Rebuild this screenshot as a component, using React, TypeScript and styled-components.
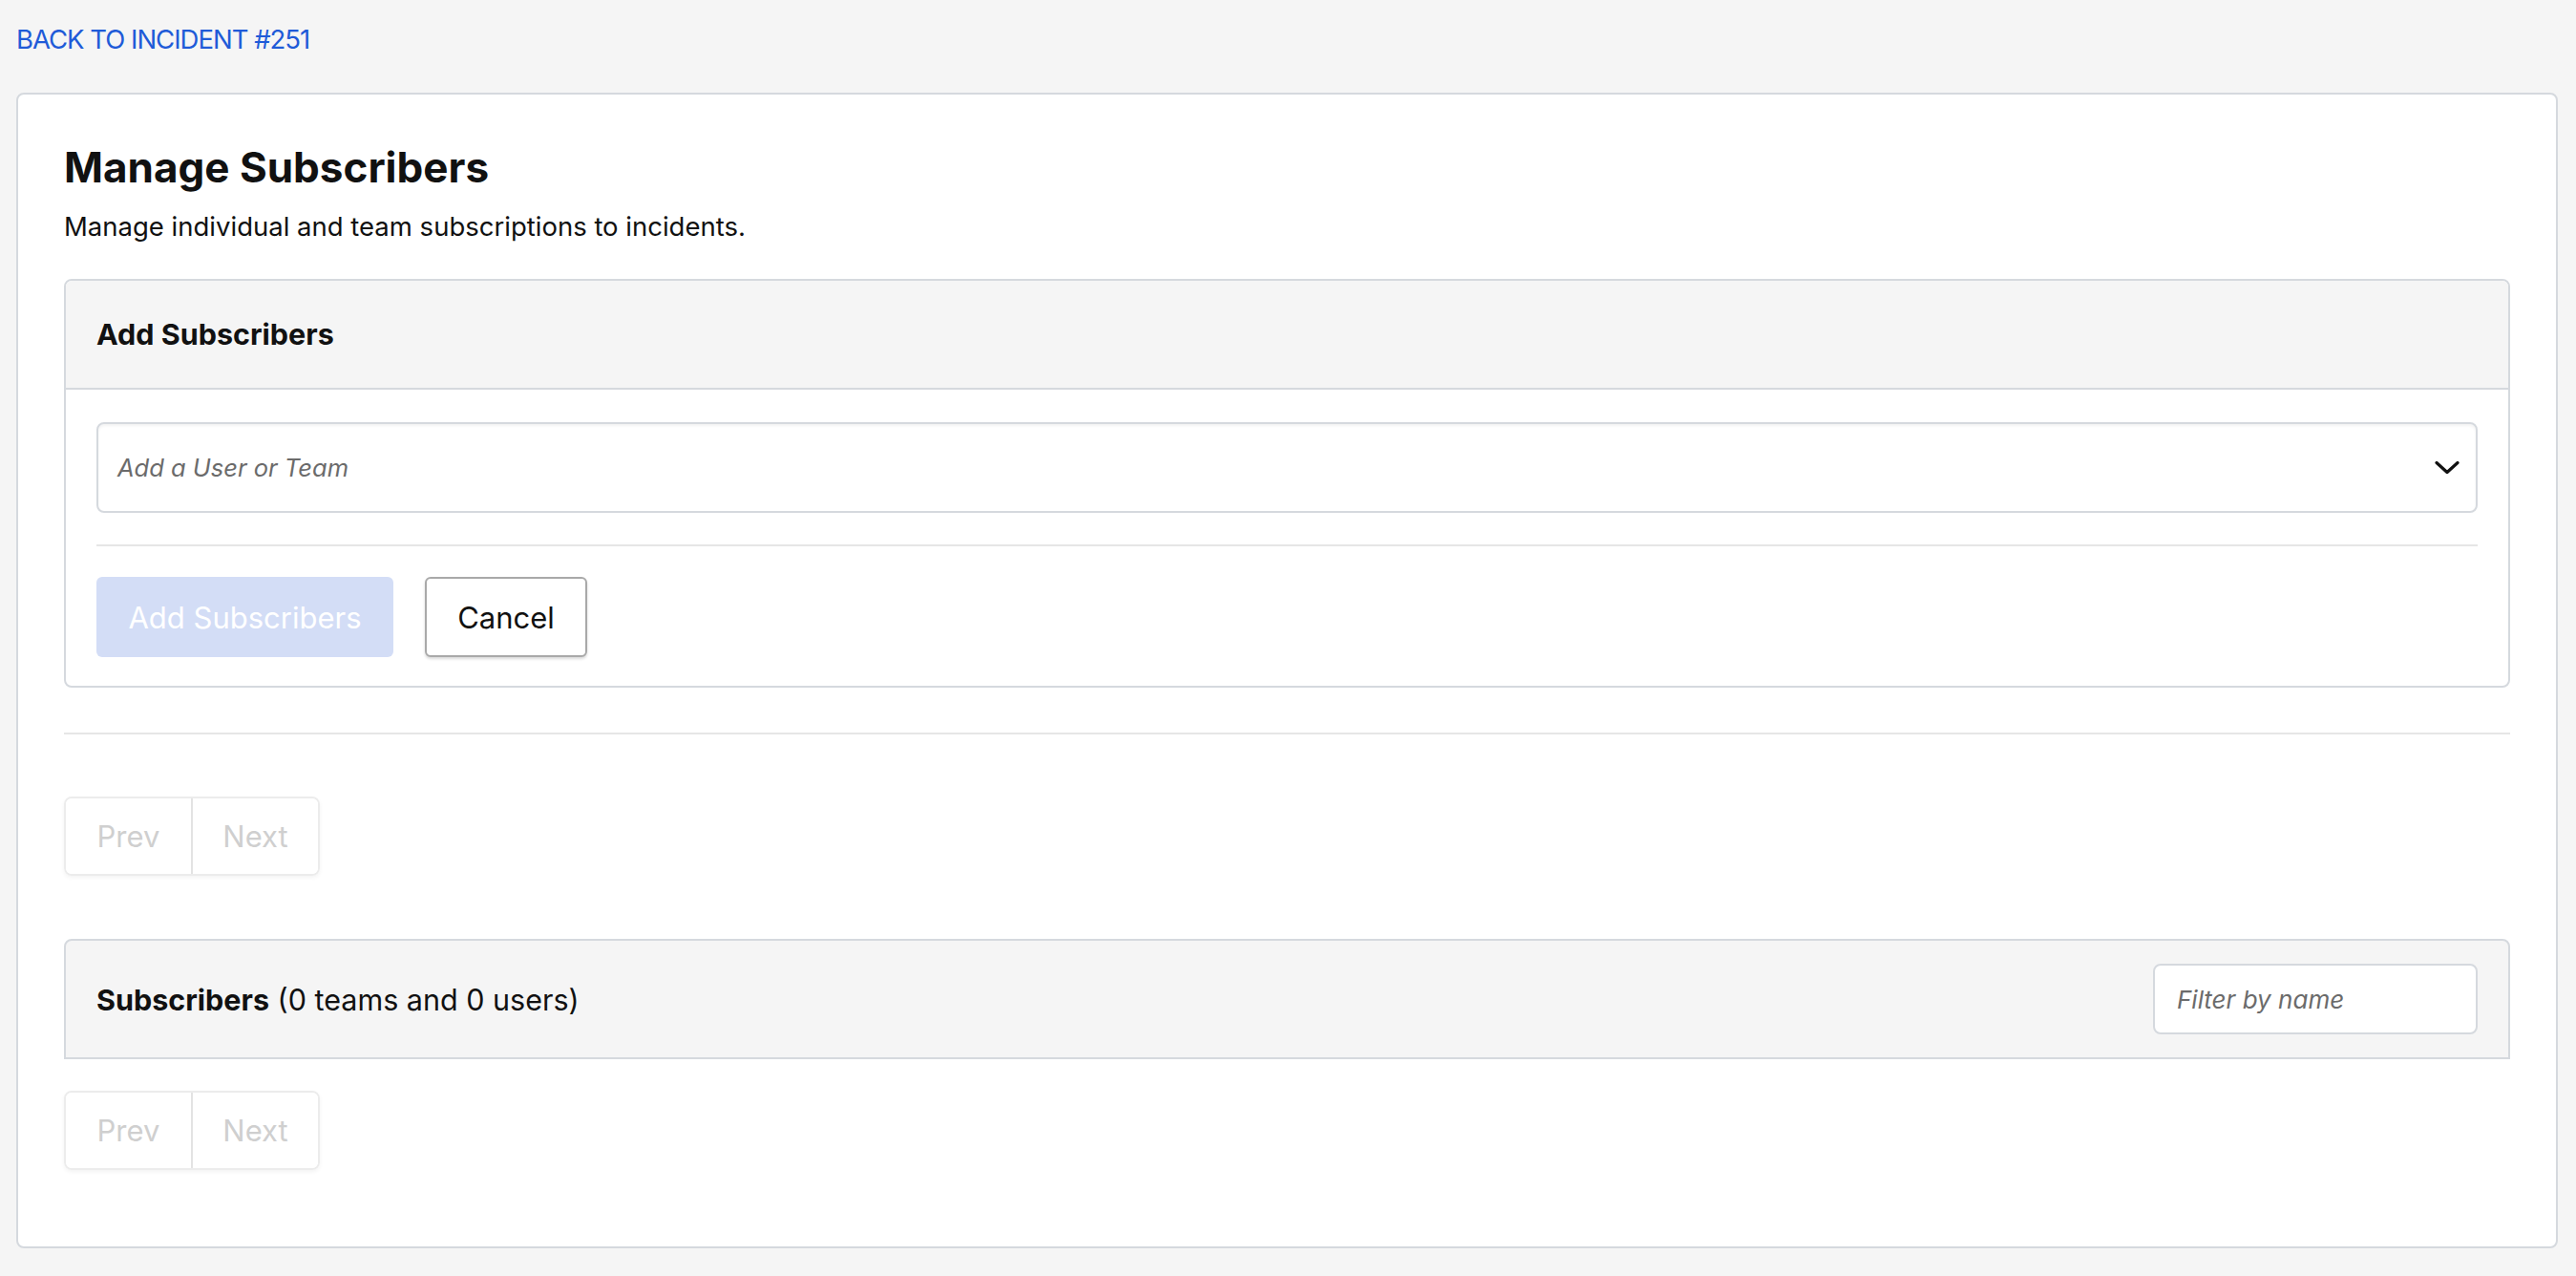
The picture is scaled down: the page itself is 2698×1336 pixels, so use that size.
import styled, { createGlobalStyle } from 'styled-components'

const GlobalStyle = createGlobalStyle`
  html, body {
    margin: 0;
    padding: 0;
    background: #f5f5f5;
  }
  body {
    font-family: Inter, 'Liberation Sans', sans-serif;
    color: #111;
    font-size: 27.5px;
  }
  * {
    box-sizing: border-box;
  }
`

const Page = styled.div`
  padding: 21px 19px 30px 17px;
`

const BackLink = styled.a`
  display: block;
  color: #1f5bd8;
  text-decoration: none;
  font-size: 27.5px;
  line-height: 41px;
  letter-spacing: -1px;
  text-transform: uppercase;
`

const Card = styled.section`
  margin-top: 35px;
  background: #fff;
  border: 2px solid #d5d9de;
  border-radius: 8px;
  padding: 50px 48px 80px;
`

const Title = styled.h1`
  margin: 0;
  font-size: 44px;
  line-height: 53px;
  font-weight: 700;
  color: #111;
`

const Subtitle = styled.p`
  margin: 15px 0 0;
  font-size: 27.5px;
  line-height: 41px;
`

const Panel = styled.div`
  margin-top: 34px;
  border: 2px solid #d5d9de;
  border-radius: 8px;
  overflow: hidden;
`

const PanelHeader = styled.div`
  background: #f5f5f5;
  border-bottom: 2px solid #d5d9de;
  padding: 34px 32px;
  font-size: 30.5px;
  line-height: 44px;
  font-weight: 700;
`

const PanelBody = styled.div`
  padding: 34px 32px 30px;
`

const Select = styled.div`
  height: 95px;
  border: 2px solid #d5d9de;
  border-radius: 8px;
  box-shadow: inset 0 2px 3px rgba(0, 0, 0, 0.05);
  display: flex;
  align-items: center;
  justify-content: space-between;
  padding: 0 17px 0 20px;
`

const Placeholder = styled.span<{ $size: number }>`
  font-style: italic;
  color: #6b6b6b;
  font-size: ${({ $size }) => $size}px;
`

const Divider = styled.hr<{ $top: number; $bottom: number }>`
  border: 0;
  height: 2px;
  background: #e6e6e6;
  margin: ${({ $top }) => $top}px 0 ${({ $bottom }) => $bottom}px;
`

const ButtonRow = styled.div`
  display: flex;
  gap: 33px;
`

const Button = styled.button<{ $variant: 'primary' | 'secondary' }>`
  height: 84px;
  font-family: inherit;
  font-size: 31px;
  border-radius: 6px;
  padding: 0;
  ${({ $variant }) =>
    $variant === 'primary'
      ? `
    width: 311px;
    background: #d3ddf6;
    color: #fff;
    border: 0;
  `
      : `
    width: 170px;
    background: #fff;
    color: #111;
    border: 2px solid #a9a9a9;
    box-shadow: 0 2px 3px rgba(0, 0, 0, 0.15);
  `}
`

const Pager = styled.div<{ $top: number }>`
  margin-top: ${({ $top }) => $top}px;
  display: flex;
  width: fit-content;
  height: 83px;
  border: 2px solid #ececec;
  border-radius: 8px;
  box-shadow: 0 2px 4px rgba(0, 0, 0, 0.05);
  overflow: hidden;
`

const PagerButton = styled.button<{ $width: number }>`
  width: ${({ $width }) => $width}px;
  background: #fff;
  border: 0;
  padding: 0;
  font-family: inherit;
  font-size: 31px;
  color: #cfcfcf;
  & + & {
    border-left: 2px solid #e3e3e3;
  }
`

const ListHeader = styled.div`
  margin-top: 66px;
  height: 126px;
  background: #f5f5f5;
  border: 2px solid #d5d9de;
  border-radius: 8px 8px 0 0;
  display: flex;
  align-items: center;
  justify-content: space-between;
  padding: 0 32px;
  font-size: 30.5px;
`

const FilterInput = styled.div`
  width: 340px;
  height: 74px;
  background: #fff;
  border: 2px solid #d5d9de;
  border-radius: 8px;
  display: flex;
  align-items: center;
  padding-left: 23px;
`

const ChevronDown = () => (
  <svg width="26" height="15" viewBox="0 0 26 15" fill="none">
    <path d="M2 2.5 L13 12.5 L24 2.5" stroke="#111" strokeWidth="3.2" strokeLinecap="round" strokeLinejoin="round" />
  </svg>
)

const Pagination = ({ top }: { top: number }) => (
  <Pager $top={top}>
    <PagerButton $width={131}>Prev</PagerButton>
    <PagerButton $width={133}>Next</PagerButton>
  </Pager>
)

export default function App() {
  return (
    <Page>
      <GlobalStyle />
      <BackLink href="#">Back to Incident #251</BackLink>
      <Card>
        <Title>Manage Subscribers</Title>
        <Subtitle>Manage individual and team subscriptions to incidents.</Subtitle>
        <Panel>
          <PanelHeader>Add Subscribers</PanelHeader>
          <PanelBody>
            <Select>
              <Placeholder $size={25.5}>Add a User or Team</Placeholder>
              <ChevronDown />
            </Select>
            <Divider $top={33} $bottom={32} />
            <ButtonRow>
              <Button $variant="primary">Add Subscribers</Button>
              <Button $variant="secondary">Cancel</Button>
            </ButtonRow>
          </PanelBody>
        </Panel>
        <Divider $top={47} $bottom={0} />
        <Pagination top={65} />
        <ListHeader>
          <span>
            <b>Subscribers</b> (0 teams and 0 users)
          </span>
          <FilterInput>
            <Placeholder $size={26}>Filter by name</Placeholder>
          </FilterInput>
        </ListHeader>
        <Pagination top={33} />
      </Card>
    </Page>
  )
}
